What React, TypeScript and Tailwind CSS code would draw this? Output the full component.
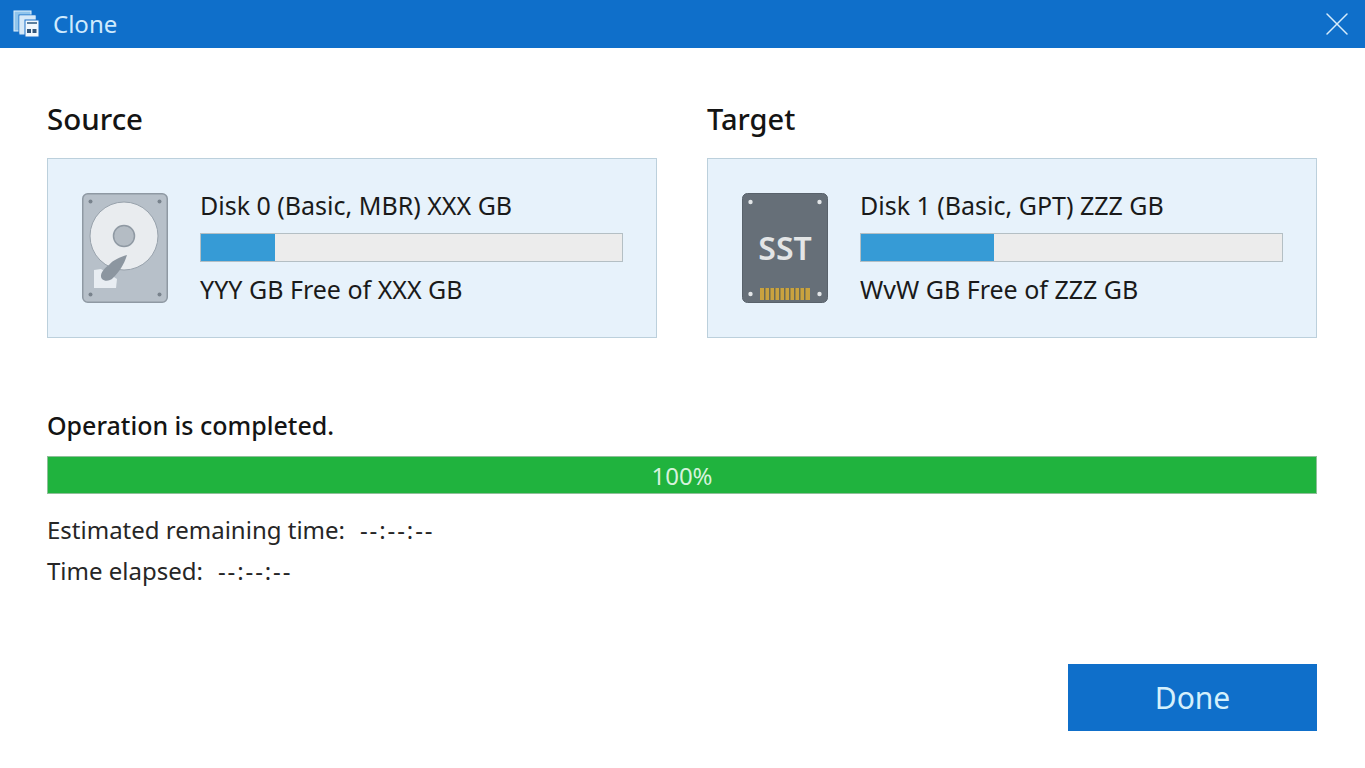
import { X } from 'lucide-react'

function CloneIcon() {
  return (
    <svg width="28" height="28" viewBox="0 0 28 28" className="shrink-0">
      <rect x="1" y="1" width="17" height="20" fill="#8fc4ec" stroke="#e6f3fc" strokeWidth="1" />
      <rect x="6" y="5" width="17" height="20" fill="#cfe6f8" stroke="#1a70c8" strokeWidth="1" />
      <rect x="6.5" y="5.5" width="16" height="18" fill="#d6e9f8" />
      <rect x="12" y="10" width="14" height="17" fill="#f2f8fd" stroke="#1a70c8" strokeWidth="1" />
      <rect x="14" y="12" width="10" height="2" fill="#5c7f9e" />
      <rect x="14" y="19" width="4" height="4" fill="#33567a" />
      <rect x="19.5" y="19" width="4" height="4" fill="#33567a" />
    </svg>
  )
}

function HddIcon() {
  return (
    <svg width="86" height="110" viewBox="0 0 86 110" className="shrink-0">
      <rect x="0.75" y="0.75" width="84.5" height="108.5" rx="5" fill="#b7c0c9" stroke="#8f99a3" strokeWidth="1.5" />
      <circle cx="8.5" cy="8.5" r="2" fill="#78828c" />
      <circle cx="77.5" cy="8.5" r="2" fill="#78828c" />
      <circle cx="8.5" cy="101.5" r="2" fill="#78828c" />
      <circle cx="77.5" cy="101.5" r="2" fill="#78828c" />
      <circle cx="42" cy="43" r="34" fill="#e9ecef" stroke="#98a2ac" strokeWidth="1" />
      <circle cx="42" cy="43" r="10.5" fill="#b4bcc4" stroke="#8f99a3" strokeWidth="1.5" />
      <path d="M12 77 L12 95 L34 95 L35 86 L19 76 Z" fill="#e8edf2" />
      <path d="M45 62 C38 64 31 67 27 72 C21 76 17 82 20 86 C23 89 28 88 31 85 C37 79 42 72 45 62 Z" fill="#8c96a0" />
    </svg>
  )
}

function SsdIcon() {
  return (
    <svg width="86" height="110" viewBox="0 0 86 110" className="shrink-0">
      <rect x="0.5" y="0.5" width="85" height="109" rx="5" fill="#666f78" stroke="#59626b" strokeWidth="1" />
      <circle cx="8.5" cy="9" r="2.2" fill="#e3e6e8" />
      <circle cx="77.5" cy="9" r="2.2" fill="#e3e6e8" />
      <circle cx="8.5" cy="101" r="2.2" fill="#e3e6e8" />
      <circle cx="77.5" cy="101" r="2.2" fill="#e3e6e8" />
      <rect x="18" y="95" width="50" height="12" fill="#c9a23f" />
      {[22, 27, 32, 37, 42, 47, 52, 57, 62].map((x) => (
        <rect key={x} x={x} y="95" width="1.5" height="12" fill="#6b6a55" />
      ))}
    </svg>
  )
}

function DiskCard({
  title,
  free,
  percent,
  ssd,
}: {
  title: string
  free: string
  percent: number
  ssd?: boolean
}) {
  return (
    <div className="flex h-[180px] w-[610px] items-center border border-[#bcd0dc] bg-[#e7f2fb] px-[34px]">
      <div className="relative">
        {ssd ? <SsdIcon /> : <HddIcon />}
        {ssd && (
          <span className="absolute left-0 right-0 top-[35px] text-center text-[32px] font-semibold leading-[40px] text-[#e3e5e6]">
            SST
          </span>
        )}
      </div>
      <div className="ml-[32px] flex-1 pb-[3px]">
        <p className="text-[25px] leading-[34px] text-[#1a1a1a]">{title}</p>
        <div className="mb-[10px] mt-[11px] h-[29px] w-[423px] border border-[#b4bfc4] bg-[#ececec]">
          <div className="h-full bg-[#369bd6]" style={{ width: `${percent}%` }} />
        </div>
        <p className="text-[25px] leading-[34px] text-[#1a1a1a]">{free}</p>
      </div>
    </div>
  )
}

function TimeRow({ label, className }: { label: string; className: string }) {
  return (
    <p className={`text-[24px] leading-[36px] text-[#262626] ${className}`}>
      {label}
      <span className="ml-[15px] tracking-[1.9px]">--:--:--</span>
    </p>
  )
}

export default function App() {
  return (
    <div
      className="flex h-[768px] w-[1365px] flex-col overflow-hidden bg-white"
      style={{ fontFamily: '"Noto Sans", "Open Sans", sans-serif' }}
    >
      <header className="flex h-[48px] items-center justify-between bg-[#0f6fca] pl-[13px] pr-[8px]">
        <div className="flex items-center gap-[12px]">
          <CloneIcon />
          <span className="text-[24px] leading-[32px] text-[#cfeafd]">Clone</span>
        </div>
        <X size={40} strokeWidth={0.9} className="text-[#d6ecfb]" />
      </header>

      <main className="flex w-[1317px] flex-1 flex-col pl-[47px]">
        <div className="mt-[50px] flex gap-[50px]">
          <section>
            <h2 className="mb-[18px] text-[29.5px] font-medium leading-[42px] text-[#141414]">Source</h2>
            <DiskCard title="Disk 0 (Basic, MBR) XXX GB" free="YYY GB Free of XXX GB" percent={17.5} />
          </section>
          <section>
            <h2 className="mb-[18px] text-[29px] font-medium leading-[42px] text-[#141414]">Target</h2>
            <DiskCard title="Disk 1 (Basic, GPT) ZZZ GB" free="WvW GB Free of ZZZ GB" percent={31.5} ssd />
          </section>
        </div>

        <p className="mt-[69px] text-[25px] font-medium leading-[36px] text-[#141414]">Operation is completed.</p>
        <div className="mt-[13px] flex h-[38px] w-full items-center justify-center border border-[#8fbf99] bg-[#20b33e] pt-[1px]">
          <span className="text-[24px] leading-none text-[#d6f2dc]">100%</span>
        </div>
        <TimeRow label="Estimated remaining time:" className="mt-[18px]" />
        <TimeRow label="Time elapsed:" className="mt-[5px]" />

        <div className="mt-[75px] flex justify-end">
          <button className="h-[67px] w-[249px] bg-[#0f6fca] text-[30px] text-[#d5f0fc]">Done</button>
        </div>
      </main>
    </div>
  )
}
